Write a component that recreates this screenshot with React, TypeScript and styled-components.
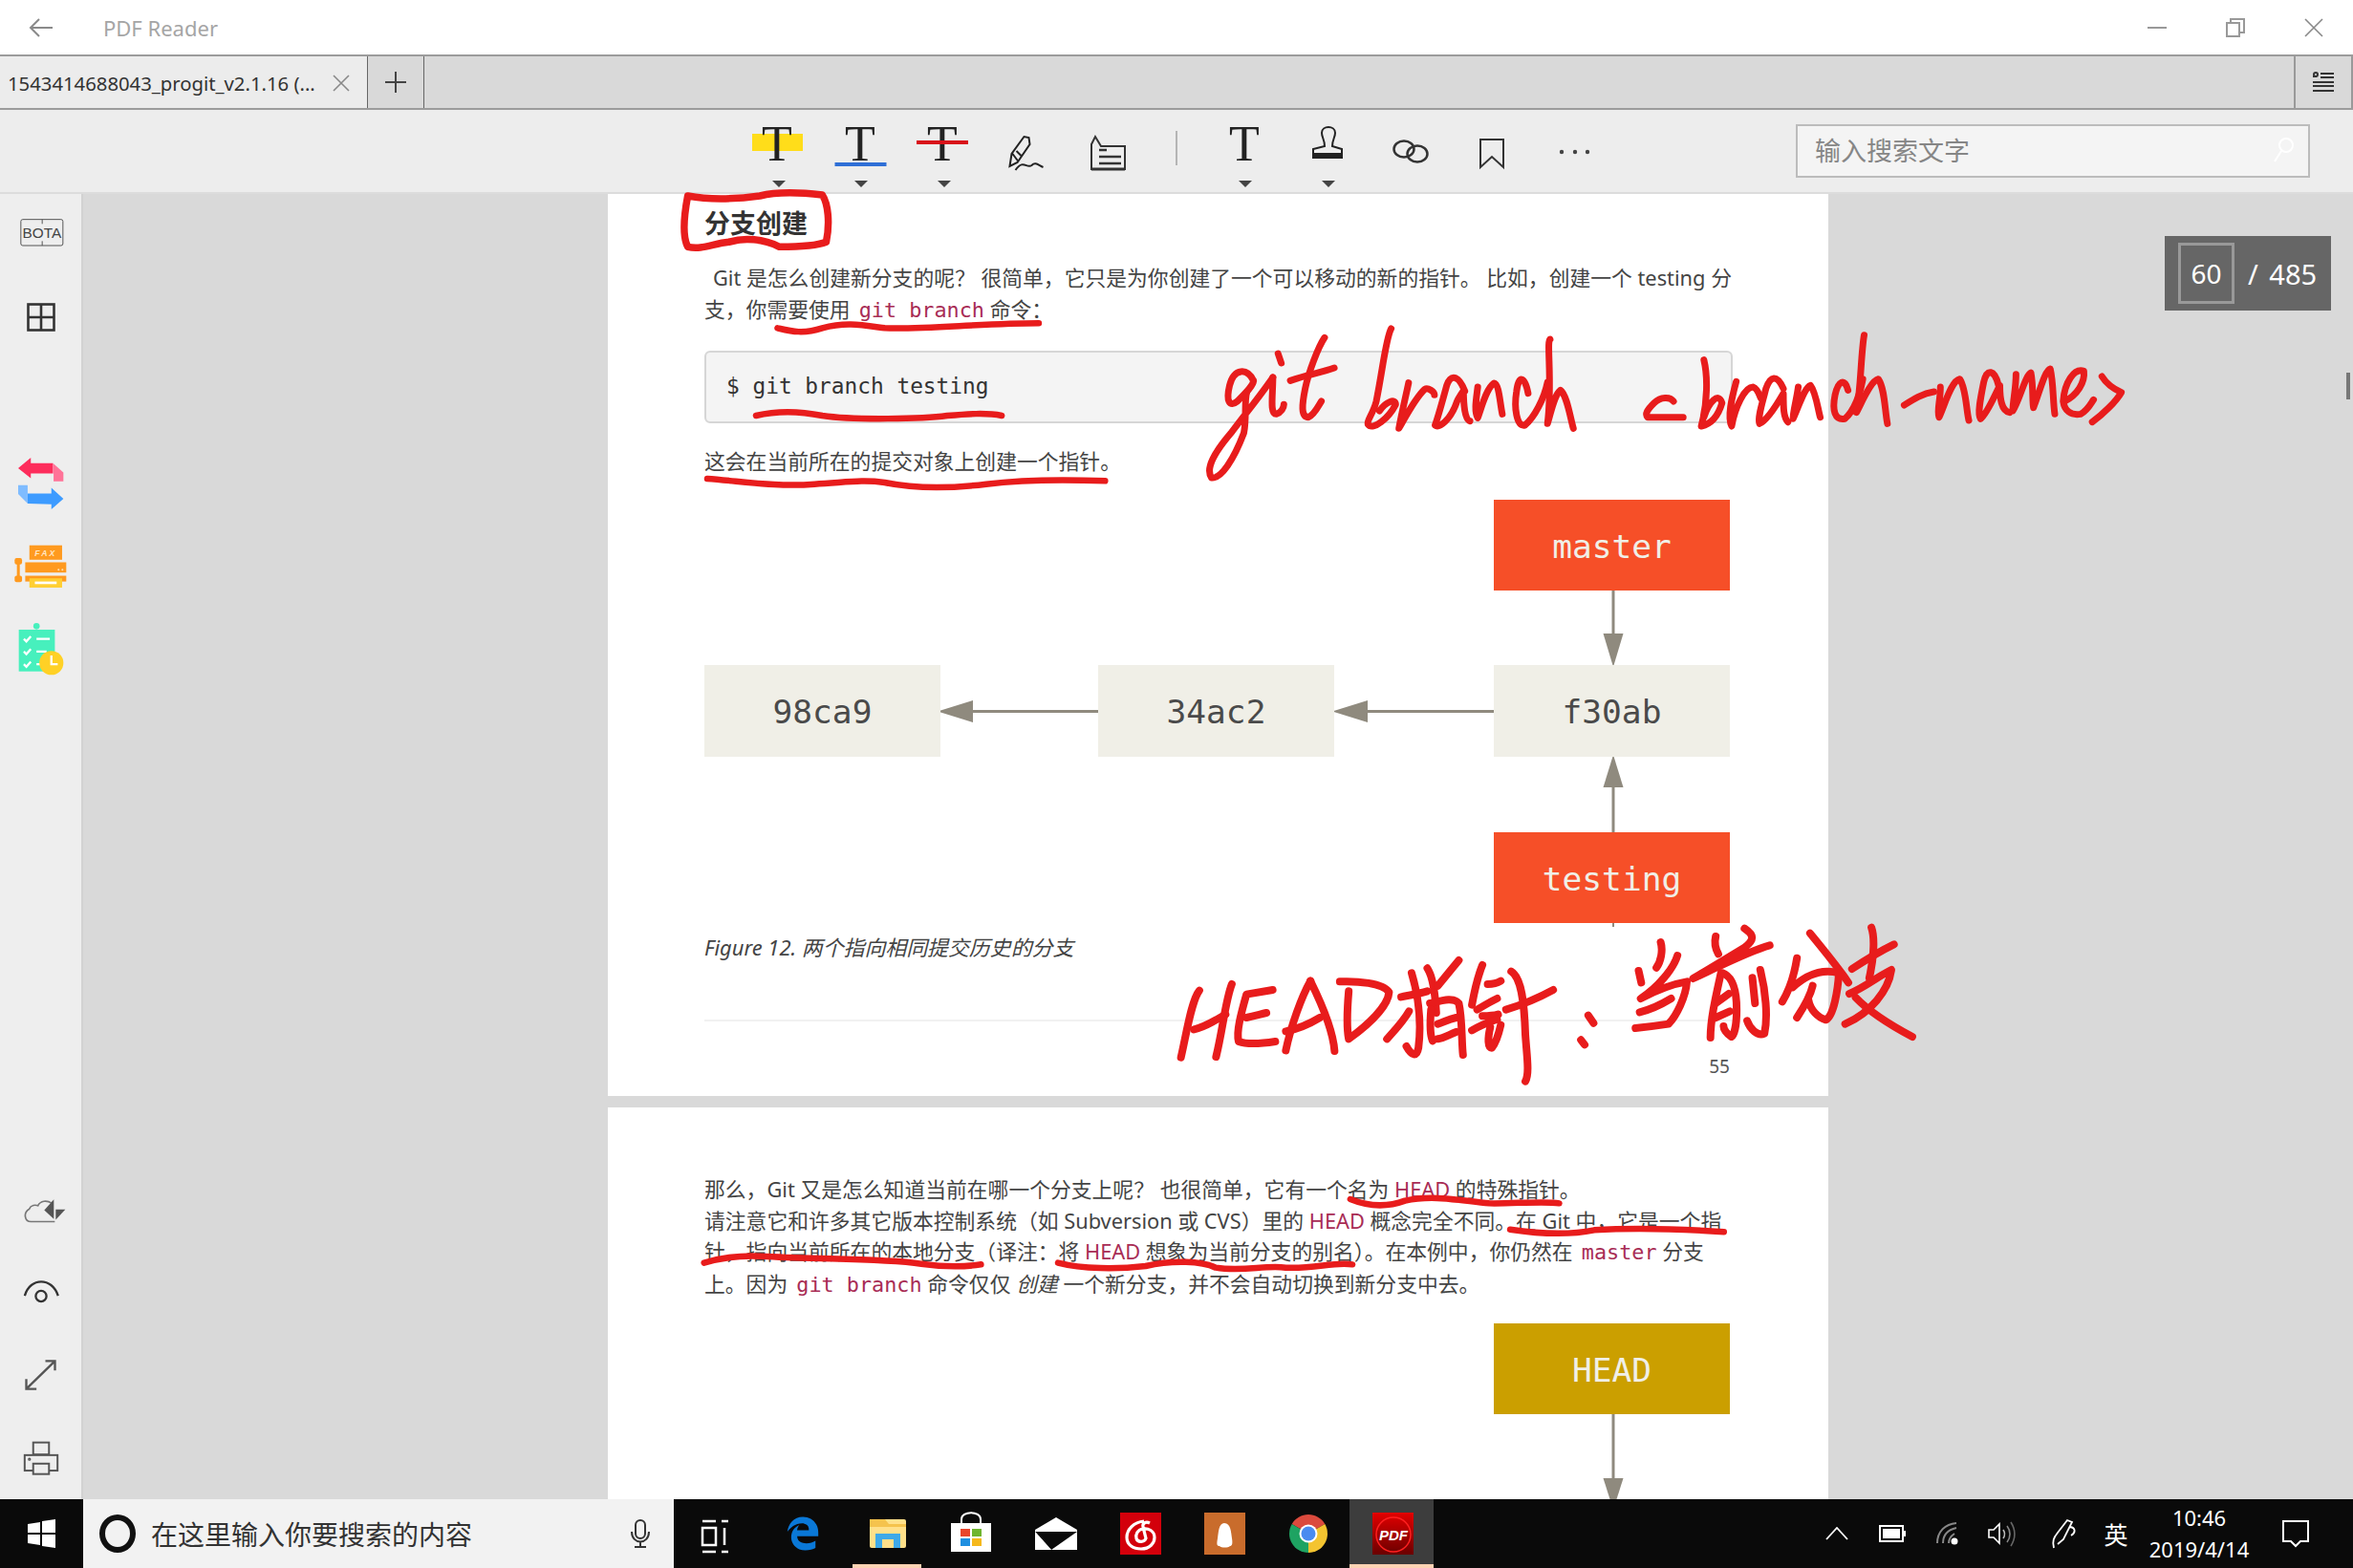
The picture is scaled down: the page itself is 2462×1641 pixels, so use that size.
import React from "react";
import styled, { createGlobalStyle } from "styled-components";
import { FaEdgeLegacy } from "react-icons/fa6";

const SANS = `"Noto Sans", "Noto Sans CJK SC", sans-serif`;
const CJK = `"Noto Sans CJK SC", "Noto Sans", sans-serif`;
const MONO = `"DejaVu Sans Mono", "Liberation Mono", "Noto Sans CJK SC", monospace`;

const Global = createGlobalStyle`
  html, body { margin: 0; padding: 0; overflow: hidden; background: #fff; }
  * { box-sizing: border-box; }
`;

const Shell = styled.div`
  position: relative;
  width: 2462px;
  height: 1641px;
  display: flex;
  flex-direction: column;
  overflow: hidden;
  font-family: ${SANS};
`;

/* title bar */
const TitleBar = styled.header`
  height: 57px;
  flex: none;
  display: flex;
  align-items: center;
  background: #fff;
  padding-left: 30px;
`;
const TitleText = styled.span`
  margin-left: 52px;
  font-size: 22px;
  color: #a5a5a5;
`;
const WindowControls = styled.div`
  margin-left: auto;
  display: flex;
`;
const WinButton = styled.button`
  width: 82px;
  height: 57px;
  padding: 0;
  border: 0;
  background: none;
  display: flex;
  align-items: center;
  justify-content: center;
`;

/* tabs */
const TabBar = styled.nav`
  height: 58px;
  flex: none;
  display: flex;
  background: #d9d9d9;
  border-top: 2px solid #9c9c9c;
  border-bottom: 2px solid #9c9c9c;
`;
const Tab = styled.div`
  width: 385px;
  display: flex;
  align-items: center;
  justify-content: space-between;
  padding: 2px 18px 0 8px;
  background: #ececec;
  border-right: 1px solid #666;
  font-size: 20.3px;
  color: #333;
  white-space: nowrap;
`;
const NewTab = styled.div`
  width: 59px;
  display: flex;
  align-items: center;
  justify-content: center;
  border-right: 1px solid #666;
`;
const TabMenu = styled.div`
  margin-left: auto;
  width: 62px;
  display: flex;
  align-items: center;
  justify-content: center;
  border-left: 2px solid #999;
  border-right: 2px solid #999;
`;

/* toolbar */
const Toolbar = styled.div`
  height: 88px;
  flex: none;
  display: flex;
  align-items: flex-start;
  padding-left: 770px;
  background: #ededed;
  border-bottom: 2px solid #dcdcdc;
`;
const Tool = styled.div`
  width: 86.5px;
  height: 86px;
  padding-top: 10px;
  display: flex;
  flex-direction: column;
  align-items: center;
  flex: none;
`;
const ToolIcon = styled.svg`
  display: block;
  width: 56px;
  height: 56px;
  overflow: visible;
`;
const Caret = styled.i`
  display: block;
  margin: 8px 0 0 3px;
  width: 0;
  height: 0;
  border-left: 7px solid transparent;
  border-right: 7px solid transparent;
  border-top: 7px solid #444;
`;
const ToolDivider = styled.div`
  width: 56px;
  flex: none;
  height: 85px;
  display: flex;
  justify-content: center;
  padding-top: 22px;
  &::before {
    content: "";
    display: block;
    width: 2px;
    height: 36px;
    background: #b5b5b5;
  }
`;
const SearchBox = styled.div`
  position: absolute;
  left: 1879px;
  top: 130px;
  width: 538px;
  height: 56px;
  display: flex;
  align-items: center;
  justify-content: space-between;
  padding: 0 14px 4px 18px;
  background: #f4f4f4;
  border: 2px solid #bcbcbc;
  font-family: ${CJK};
  font-size: 27px;
  color: #868686;
`;

/* body */
const Body = styled.div`
  flex: 1;
  min-height: 0;
  display: flex;
  overflow: hidden;
`;
const Sidebar = styled.aside`
  width: 87px;
  flex: none;
  display: flex;
  flex-direction: column;
  justify-content: space-between;
  background: #eeeeee;
  border-right: 2px solid #d2d2d2;
`;
const SideGroup = styled.div<{ $offset?: number }>`
  display: flex;
  flex-direction: column;
  margin-top: ${(p) => p.$offset ?? 0}px;
`;
const SideSlot = styled.div<{ $left?: number; $top?: number; $bottom?: number }>`
  height: 87px;
  display: flex;
  align-items: center;
  justify-content: center;
  padding-left: ${(p) => p.$left ?? 0}px;
  padding-top: ${(p) => p.$top ?? 0}px;
  padding-bottom: ${(p) => p.$bottom ?? 0}px;
`;
const Canvas = styled.main`
  position: relative;
  flex: 1;
  min-width: 0;
  display: flex;
  flex-direction: column;
  align-items: center;
  gap: 12px;
  background: #d9d9d9;
  overflow: hidden;
`;
const Page = styled.section<{ $top: number; $height?: number }>`
  width: 1277px;
  flex: none;
  height: ${(p) => (p.$height ? `${p.$height}px` : "auto")};
  padding: ${(p) => p.$top}px 100px 0 101px;
  background: #fff;
  color: #444;
  font-size: 21.8px;
`;
const Heading = styled.h3`
  margin: 0;
  font-family: ${CJK};
  font-size: 27px;
  line-height: 33px;
  font-weight: 700;
  color: #333;
`;
const Lines = styled.div<{ $mt?: number; $lh?: number }>`
  margin-top: ${(p) => p.$mt ?? 0}px;
  line-height: ${(p) => p.$lh ?? 33}px;
`;
const Line = styled.div<{ $indent?: number }>`
  white-space: nowrap;
  padding-left: ${(p) => p.$indent ?? 0}px;
`;
const Code = styled.span`
  margin-left: 3.5px;
  font-family: ${MONO};
  font-size: 21.8px;
  color: #a82c55;
`;
const Red = styled.span`
  color: #a82c55;
`;
const Em = styled.em`
  font-style: italic;
`;
const CodeBox = styled.pre`
  margin: 26px 0 0;
  height: 76px;
  padding: 0 21px 3px;
  display: flex;
  align-items: center;
  background: #f4f4f4;
  border: 2px solid #d6d6d6;
  border-radius: 6px;
  font-family: ${MONO};
  font-size: 22.8px;
  color: #333;
`;
const DiagramGrid = styled.div`
  margin-top: 23.5px;
  display: grid;
  grid-template-columns: 246px 166px 247px 167px 250px;
  grid-template-rows: 95px 78px 96px 79px 95px;
  grid-template-areas:
    ". . . . master"
    ". . . . down"
    "a left1 b left2 c"
    ". . . . up"
    ". . . . testing";
`;
const Node = styled.div<{ $area?: string; $tone: "red" | "beige" | "gold"; $stub?: boolean }>`
  grid-area: ${(p) => p.$area ?? "auto"};
  position: relative;
  width: 247px;
  height: ${(p) => (p.$tone === "beige" ? 96 : 95)}px;
  padding-top: 3px;
  display: flex;
  align-items: center;
  justify-content: center;
  font-family: ${MONO};
  font-size: 34.5px;
  background: ${(p) => (p.$tone === "red" ? "#f64f28" : p.$tone === "gold" ? "#cb9f00" : "#f0efe7")};
  color: ${(p) => (p.$tone === "beige" ? "#4a4a4a" : "#f0efe7")};
  &::after {
    content: "";
    display: ${(p) => (p.$stub ? "block" : "none")};
    position: absolute;
    left: 124px;
    top: 100%;
    width: 2px;
    height: 4px;
    background: #8f8a7e;
  }
`;
const ArrowCell = styled.svg<{ $area: string }>`
  grid-area: ${(p) => p.$area};
  display: block;
  width: 100%;
  height: 100%;
  overflow: visible;
`;
const Caption = styled.div`
  margin-top: 9px;
  line-height: 33px;
  font-style: italic;
  font-size: 21.9px;
  color: #444;
`;
const FootRule = styled.hr`
  margin: 59px 0 0;
  border: 0;
  height: 2px;
  background: #f1f1f1;
`;
const PageNumber = styled.div`
  margin-top: 35px;
  padding-right: 3px;
  text-align: right;
  font-size: 19px;
  line-height: 24px;
  color: #555;
`;
const HeadBlock = styled.div`
  margin: 23.5px 0 0 826px;
  width: 247px;
`;
const HeadStem = styled.svg`
  display: block;
  width: 247px;
  height: 100px;
`;
const PageCounter = styled.div`
  position: absolute;
  left: 2178px;
  top: 44px;
  width: 174px;
  height: 78px;
  display: flex;
  align-items: center;
  padding-left: 14px;
  background: #666;
  color: #fff;
  font-size: 28px;
`;
const PageInput = styled.div`
  width: 59px;
  height: 64px;
  display: flex;
  align-items: center;
  justify-content: center;
  border: 3px solid #999;
  margin-right: 14px;
`;
const PageTotal = styled.span`
  font-size: 29px;
  word-spacing: 4px;
`;
const ScrollThumb = styled.div`
  position: absolute;
  right: 3px;
  top: 187px;
  width: 4px;
  height: 28px;
  background: #777;
`;

/* taskbar */
const Taskbar = styled.footer`
  height: 72px;
  flex: none;
  display: flex;
  background: #0a0a0a;
  color: #fff;
`;
const StartButton = styled.div`
  width: 87px;
  flex: none;
  display: flex;
  align-items: center;
  justify-content: center;
`;
const TaskSearch = styled.div`
  width: 618px;
  flex: none;
  display: flex;
  align-items: center;
  background: #f2f2f2;
  padding-left: 17px;
  font-family: ${CJK};
  font-size: 28px;
  color: #333;
`;
const Cortana = styled.i`
  display: block;
  width: 38px;
  height: 40px;
  border: 6px solid #111;
  border-radius: 50%;
  margin-right: 16px;
`;
const MicWrap = styled.span`
  margin-left: auto;
  margin-right: 25px;
  display: flex;
`;
const TaskSlot = styled.div<{ $w: number; $active?: boolean; $open?: boolean }>`
  position: relative;
  width: ${(p) => p.$w}px;
  flex: none;
  background: ${(p) => (p.$active ? "#3d3d3d" : "transparent")};
  &::after {
    content: "";
    display: ${(p) => (p.$active || p.$open ? "block" : "none")};
    position: absolute;
    bottom: 0;
    left: ${(p) => (p.$active ? 0 : 8)}px;
    right: ${(p) => (p.$active ? 0 : 8)}px;
    height: 4px;
    background: #fdd2b3;
  }
`;
const TaskIcon = styled.svg`
  display: block;
  width: 100%;
  height: 72px;
`;
const EdgeLogo = styled(FaEdgeLegacy)`
  position: absolute;
  left: 26px;
  top: 17px;
  width: 36px;
  height: 38px;
  color: #0a78d7;
`;
const Tray = styled.div`
  margin-left: auto;
  display: flex;
  padding-right: 30px;
`;
const TrayItem = styled.div<{ $w: number }>`
  width: ${(p) => p.$w}px;
  flex: none;
  display: flex;
  flex-direction: column;
  align-items: center;
  justify-content: center;
`;
const ImeLabel = styled.span`
  font-family: ${CJK};
  font-size: 25px;
`;
const ClockLine = styled.span`
  font-size: 22px;
  line-height: 33px;
  white-space: nowrap;
`;

/* ink overlay */
const InkLayer = styled.svg`
  position: absolute;
  left: 0;
  top: 0;
  width: 2462px;
  height: 1641px;
  pointer-events: none;
  fill: none;
  stroke: #e81c1c;
  stroke-linecap: round;
  stroke-linejoin: round;
`;

const Ink: React.FC<{ x: number; y: number; sx: number; sy?: number; w: number; d: string[] }> = ({ x, y, sx, sy = 3, w, d }) => (
  <g transform={`translate(${x} ${y}) scale(${1 / sx} ${1 / sy})`}>
    {d.map((p, i) => (
      <path key={i} d={p} strokeWidth={w} vectorEffect="non-scaling-stroke" />
    ))}
  </g>
);

const scribble = [
  "M165 235 C155 195 135 195 128 250 C122 300 128 320 140 300 C155 270 165 250 165 235",
  "M195 225 C180 270 160 320 130 400 C105 460 90 510 100 540 C115 545 135 480 150 400 C155 350 150 300 155 270",
  "M195 225 C195 280 190 340 200 340 C208 335 212 320 212 310",
  "M203 150 L208 180",
  "M275 100 C265 130 250 210 245 260 C240 310 238 350 250 350 C260 340 265 315 270 300",
  "M222 235 C250 215 270 210 290 195",
  "M378 72 C370 100 365 200 355 300 C350 340 340 360 342 372 C350 395 375 350 385 310 C385 290 370 300 360 330",
  "M405 242 C400 290 395 330 390 385 C400 350 415 290 430 262 C435 255 445 270 445 280",
  "M492 268 C482 215 470 215 464 250 C458 295 452 340 446 375 C452 385 470 360 480 300 C482 290 490 265 490 268 C490 310 492 360 500 362",
  "M512 255 C510 290 506 330 512 352 C518 320 525 260 537 243 C545 245 546 300 550 340",
  "M590 275 C585 220 575 215 572 270 C568 320 572 380 585 375 C600 350 615 290 620 240",
  "M624 105 C618 110 628 240 620 370 C625 340 630 280 640 265 C650 280 655 350 660 385",
  "M815 300 C810 285 795 285 785 305 C775 325 770 340 775 350 C790 350 815 350 830 350",
  "M862 170 C868 220 868 300 858 378 C875 370 885 340 890 305 C885 270 870 300 862 350",
  "M912 238 C905 290 898 350 905 378 C910 320 925 255 938 255 C945 260 948 280 950 290",
  "M985 260 C975 215 965 220 958 260 C952 310 945 350 948 370 C960 360 975 310 985 275 C985 320 985 350 992 365",
  "M1008 255 C1005 300 1000 330 1000 355 C1008 320 1018 255 1027 250 C1035 270 1038 320 1042 350",
  "M1085 265 C1080 225 1070 235 1065 280 C1060 330 1065 360 1080 355 C1095 330 1105 270 1108 230",
  "M1110 92 C1105 150 1105 260 1098 335 C1105 310 1120 235 1132 230 C1142 260 1142 330 1146 370",
  "M1172 312 C1185 295 1200 275 1218 270",
  "M1228 255 C1228 300 1222 330 1226 350 C1235 310 1245 235 1258 230 C1268 260 1268 330 1272 360",
  "M1318 250 C1312 200 1300 195 1295 240 C1290 290 1285 340 1290 355 C1300 340 1310 290 1320 250 C1320 290 1322 330 1335 335",
  "M1345 215 C1345 260 1340 300 1340 330 C1350 300 1360 215 1368 210 C1372 250 1370 300 1372 320 C1380 280 1390 200 1398 198 C1403 240 1402 300 1405 340",
  "M1420 300 C1440 280 1452 240 1450 205 C1435 195 1420 240 1418 300 C1420 330 1430 345 1445 340 C1455 330 1460 310 1465 295",
  "M1478 222 C1485 245 1495 260 1508 272 C1500 300 1480 340 1463 365",
];

const headNote = [
  "M100 260 C85 290 75 400 65 470",
  "M162 240 C150 290 145 380 132 468",
  "M90 382 C110 375 130 355 150 335",
  "M240 258 L190 272 C180 330 170 390 175 420 C195 432 225 425 245 420",
  "M190 345 C205 340 215 335 228 330",
  "M312 230 C295 280 275 370 265 448",
  "M312 230 C330 290 355 380 358 450",
  "M265 388 C290 380 310 365 330 345",
  "M385 262 C382 320 380 370 385 412 C420 370 460 310 462 265 C450 235 400 230 368 232",
  "M505 205 C515 260 525 350 518 440 C515 470 505 465 495 435",
  "M485 280 C500 275 520 270 535 262",
  "M500 325 C490 355 470 390 458 412",
  "M535 190 C545 215 550 270 552 330",
  "M595 165 C580 195 565 225 555 245",
  "M540 300 C565 290 585 280 595 300 C602 350 600 420 603 462",
  "M542 320 C540 360 540 400 545 418",
  "M555 365 C565 360 575 350 590 345",
  "M555 412 C565 410 575 400 590 390",
  "M640 180 C630 220 625 260 620 305",
  "M650 240 C660 240 670 235 675 230",
  "M630 320 C645 305 655 295 668 285",
  "M640 340 C650 340 660 340 670 335",
  "M620 385 C635 370 650 360 668 350",
  "M655 375 C650 410 650 440 658 440 C668 420 672 390 675 368",
  "M695 200 C715 220 720 300 722 400 C725 470 730 520 722 545",
  "M685 320 C715 305 745 285 775 258",
  "M842 338 L852 362",
  "M828 415 L835 430",
  "M980 108 C985 135 980 170 972 188",
  "M938 198 L943 235",
  "M1012 150 C1005 190 975 250 942 285 C965 265 1000 240 1030 232 C1028 280 1010 340 995 365 C975 370 950 375 932 378",
  "M940 328 C960 320 980 305 1000 285",
  "M1085 90 C1082 110 1085 130 1090 145",
  "M1140 65 C1158 85 1160 100 1140 125 C1110 155 1070 195 1042 222 C1090 185 1150 135 1188 118",
  "M1095 205 C1085 280 1075 350 1075 408",
  "M1098 205 C1115 215 1125 250 1125 320 C1125 370 1120 400 1115 405 C1105 395 1100 380 1100 372",
  "M1085 300 L1110 270",
  "M1085 345 L1112 325",
  "M1155 220 L1160 300",
  "M1170 195 C1180 260 1185 340 1178 395 C1165 405 1150 380 1145 355",
  "M1240 158 C1235 210 1225 260 1212 295",
  "M1265 80 C1290 130 1320 190 1338 235",
  "M1232 250 C1255 215 1285 190 1320 205 C1318 260 1310 340 1295 352 C1280 345 1265 320 1262 290",
  "M1270 245 C1265 280 1250 320 1240 345",
  "M1382 62 C1390 100 1385 170 1378 220",
  "M1345 192 C1370 165 1400 135 1425 115",
  "M1340 270 C1370 250 1395 215 1420 195 C1415 260 1380 330 1332 365",
  "M1352 282 C1380 330 1420 370 1460 405",
];

const ToolT: React.FC<{ cx: number; children?: React.ReactNode }> = ({ cx, children }) => (
  <ToolIcon viewBox={`${cx - 28} 124 56 56`}>
    {children}
    <text x={cx} y={167} textAnchor="middle" fontFamily='"Liberation Serif", serif' fontSize="52" fill="#222">T</text>
  </ToolIcon>
);

const ARROW = "#8f8a7e";

const App: React.FC = () => (
  <Shell>
    <Global />
    <TitleBar>
      <svg width="26" height="22" viewBox="0 0 26 22" fill="none" stroke="#8a8a8a" strokeWidth="2">
        <path d="M25 11H3M11 2L2 11L11 20" />
      </svg>
      <TitleText>PDF Reader</TitleText>
      <WindowControls>
        <WinButton><svg width="20" height="4"><rect width="20" height="2" y="1" fill="#999" /></svg></WinButton>
        <WinButton>
          <svg width="20" height="20" fill="none" stroke="#999" strokeWidth="2"><rect x="1" y="5" width="13" height="14" /><path d="M5 5V1H19V15H14" /></svg>
        </WinButton>
        <WinButton>
          <svg width="20" height="20" fill="none" stroke="#888" strokeWidth="1.6"><path d="M1 1L19 19M19 1L1 19" /></svg>
        </WinButton>
      </WindowControls>
    </TitleBar>

    <TabBar>
      <Tab>
        <span>1543414688043_progit_v2.1.16 (...</span>
        <svg width="18" height="18" fill="none" stroke="#888" strokeWidth="1.6"><path d="M1 1L17 17M17 1L1 17" /></svg>
      </Tab>
      <NewTab>
        <svg width="22" height="22" stroke="#444" strokeWidth="2"><path d="M11 0V22M0 11H22" /></svg>
      </NewTab>
      <TabMenu>
        <svg width="24" height="22" viewBox="0 0 24 22" fill="none" stroke="#333" strokeWidth="2"><path d="M1 5H5M9 2H23M9 6H23M1 11H23M1 15H23M1 20H23" /><circle cx="4" cy="3" r="2" /></svg>
      </TabMenu>
    </TabBar>

    <Toolbar>
      <Tool>
        <ToolT cx={813}><rect x="787" y="139" width="53" height="18" fill="#ffdd1a" /></ToolT>
        <Caret />
      </Tool>
      <Tool>
        <ToolT cx={899.5}><rect x="873" y="169" width="54" height="4" fill="#2f6fd6" /></ToolT>
        <Caret />
      </Tool>
      <Tool>
        <ToolIcon viewBox="958 124 56 56">
          <text x="986" y="167" textAnchor="middle" fontFamily='"Liberation Serif", serif' fontSize="52" fill="#222">T</text>
          <rect x="959" y="146" width="54" height="4" fill="#d8121a" />
        </ToolIcon>
        <Caret />
      </Tool>
      <Tool>
        <ToolIcon viewBox="1044.5 124 56 56" fill="none" stroke="#222" strokeWidth="2">
          <path d="M1056 173 L1058 160 L1071 142 L1076 143 L1077 150 L1064 169 Z M1059 160 L1065 168 M1063 157 L1068 162" />
          <path d="M1062 177 C1070 165 1074 176 1079 172 C1083 168 1086 172 1091 174" />
        </ToolIcon>
      </Tool>
      <Tool>
        <ToolIcon viewBox="1131 124 56 56" fill="none" stroke="#333" strokeWidth="2">
          <path d="M1142 176 V150 L1146 142 L1152 152 H1177 V176 Z" />
          <path d="M1150 156 H1158 M1150 163 H1173 M1150 170 H1173" strokeWidth="2.5" />
          <path d="M1142 176 H1177" strokeWidth="3" />
        </ToolIcon>
      </Tool>
      <ToolDivider />
      <Tool>
        <ToolT cx={1301} />
        <Caret />
      </Tool>
      <Tool>
        <ToolIcon viewBox="1361 124 56 56" fill="none" stroke="#222" strokeWidth="2">
          <path d="M1387 152 C1387 145 1384 143 1384 138 C1384 130 1398 130 1398 138 C1398 143 1395 145 1395 152 L1405 155 V160 H1375 V155 Z" />
          <rect x="1375" y="160" width="30" height="4" fill="#222" />
        </ToolIcon>
        <Caret />
      </Tool>
      <Tool>
        <ToolIcon viewBox="1447 124 56 56" fill="none" stroke="#333" strokeWidth="2.5">
          <ellipse cx="1469" cy="155" rx="10.5" ry="8.5" />
          <ellipse cx="1483" cy="160" rx="10.5" ry="8.5" />
        </ToolIcon>
      </Tool>
      <Tool>
        <ToolIcon viewBox="1533 124 56 56" fill="none" stroke="#333" strokeWidth="2">
          <path d="M1549 145 H1573 V174 L1561 163 L1549 174 Z" />
        </ToolIcon>
      </Tool>
      <Tool>
        <ToolIcon viewBox="1620 124 56 56" fill="#444">
          <circle cx="1634" cy="158" r="2.2" /><circle cx="1648" cy="158" r="2.2" /><circle cx="1661" cy="158" r="2.2" />
        </ToolIcon>
      </Tool>
    </Toolbar>
    <SearchBox>
      <span>输入搜索文字</span>
      <svg width="24" height="28" fill="none" stroke="#fff" strokeWidth="2"><circle cx="15" cy="10" r="7" /><path d="M10 16L3 27" /></svg>
    </SearchBox>

    <Body>
      <Sidebar>
        <SideGroup $offset={-2}>
          <SideSlot $left={2} $bottom={4}>
            <svg width="47" height="30" viewBox="60 85 140 90" fill="none" stroke="#555" strokeWidth="3">
              <rect x="65" y="90" width="132" height="82" rx="6" />
              <path d="M132 90V104M132 158V172" />
              <text x="131" y="149" textAnchor="middle" fontFamily='"Liberation Sans", sans-serif' fontSize="46" fill="#444" stroke="none">BOTA</text>
            </svg>
          </SideSlot>
          <SideSlot>
            <svg width="30" height="30" viewBox="0 0 30 30" fill="none" stroke="#333" strokeWidth="2.6"><rect x="1.5" y="1.5" width="27" height="27" /><path d="M15 1V29M1 15H29" /></svg>
          </SideSlot>
          <SideSlot />
          <SideSlot>
            <svg width="48" height="57" viewBox="60 830 145 170">
              <polygon fill="#fd2d5c" points="60,868 100,835 100,852 170,852 170,885 100,885 100,900" />
              <polygon fill="#ff7398" points="170,852 203,882 203,910 172,910 172,885 170,885" />
              <polygon fill="#3d9bff" points="203,965 165,930 165,948 90,948 90,980 165,982 165,998" />
              <polygon fill="#7fbcff" points="60,922 90,922 90,980 60,950" />
            </svg>
          </SideSlot>
          <SideSlot>
            <svg width="57" height="47" viewBox="45 1110 170 140">
              <rect x="95" y="1115" width="102" height="45" fill="#ff9a1f" />
              <text x="146" y="1149" textAnchor="middle" fontFamily='"Liberation Sans", sans-serif' fontStyle="italic" fontWeight="700" fontSize="26" letterSpacing="6" fill="#ffe6c2">FAX</text>
              <rect x="82" y="1168" width="128" height="32" fill="#ff9a1f" />
              <rect x="82" y="1210" width="128" height="18" fill="#ff9a1f" />
              <rect x="95" y="1218" width="102" height="29" fill="#ffcf33" />
              <rect x="112" y="1228" width="68" height="8" fill="#fff" />
              <rect x="49" y="1155" width="23" height="20" rx="6" fill="#ff9a1f" />
              <rect x="56" y="1170" width="9" height="45" fill="#ff9a1f" />
              <rect x="49" y="1210" width="23" height="20" rx="6" fill="#ff9a1f" />
              <circle cx="186" cy="1191" r="3" fill="#ffe0b0" /><circle cx="198" cy="1191" r="3" fill="#ffe0b0" />
            </svg>
          </SideSlot>
          <SideSlot>
            <svg width="48" height="57" viewBox="60 1350 145 170">
              <rect x="62" y="1373" width="114" height="132" fill="#47f0bd" />
              <circle cx="118" cy="1362" r="10" fill="#47f0bd" />
              <path d="M78 1402L86 1410L100 1394M78 1442L86 1450L100 1434M78 1482L86 1490L100 1474M118 1402H160M118 1442H150M118 1482H130" fill="none" stroke="#fff" strokeWidth="7" />
              <circle cx="165" cy="1478" r="38" fill="#ffd126" />
              <path d="M165 1455V1482H185" fill="none" stroke="#fff" strokeWidth="7" />
            </svg>
          </SideSlot>
        </SideGroup>
        <SideGroup>
          <SideSlot $left={7} $top={6}>
            <svg width="45" height="27" viewBox="75 105 135 80">
              <path d="M175 178H100C80 178 75 150 95 138C100 125 115 125 122 128C130 112 150 110 165 120" fill="none" stroke="#777" strokeWidth="5" />
              <polygon fill="#555" points="172,108 142,142 172,170" />
              <polygon fill="#555" points="178,140 208,140 178,172" />
            </svg>
          </SideSlot>
          <SideSlot>
            <svg width="40" height="28" viewBox="70 350 120 85" fill="none" stroke="#333" strokeWidth="7">
              <path d="M78 405C95 345 165 345 184 405" /><circle cx="130" cy="406" r="17" />
            </svg>
          </SideSlot>
          <SideSlot>
            <svg width="37" height="35" viewBox="75 605 110 105" fill="none" stroke="#555" strokeWidth="7">
              <path d="M88 700L175 615M145 615H175V645M85 672V703H117" />
            </svg>
          </SideSlot>
          <SideSlot>
            <svg width="40" height="38" viewBox="70 860 120 115" fill="none" stroke="#555" strokeWidth="6">
              <rect x="105" y="868" width="50" height="38" />
              <rect x="78" y="908" width="104" height="49" fill="#eee" />
              <rect x="105" y="935" width="50" height="33" fill="#eee" />
              <circle cx="93" cy="921" r="2" />
            </svg>
          </SideSlot>
        </SideGroup>
      </Sidebar>

      <Canvas>
        <Page $top={13} $height={944}>
          <Heading>分支创建</Heading>
          <Lines $mt={25}>
            <Line $indent={9}>Git 是怎么创建新分支的呢？ 很简单，它只是为你创建了一个可以移动的新的指针。 比如，创建一个 testing 分</Line>
            <Line>支，你需要使用 <Code>git branch</Code> 命令：</Line>
          </Lines>
          <CodeBox>$ git branch testing</CodeBox>
          <Lines $mt={23}>
            <Line>这会在当前所在的提交对象上创建一个指针。</Line>
          </Lines>
          <DiagramGrid>
            <Node $area="master" $tone="red">master</Node>
            <ArrowCell $area="down" viewBox="0 0 250 78">
              <path d="M125 0V50" stroke={ARROW} strokeWidth="3" />
              <polygon points="125,80 114.5,45 135.5,45" fill={ARROW} />
            </ArrowCell>
            <Node $area="a" $tone="beige">98ca9</Node>
            <ArrowCell $area="left1" viewBox="0 0 166 96">
              <path d="M30 48.5H166" stroke={ARROW} strokeWidth="3" />
              <polygon points="-2,48.5 35,37 35,60" fill={ARROW} />
            </ArrowCell>
            <Node $area="b" $tone="beige">34ac2</Node>
            <ArrowCell $area="left2" viewBox="0 0 167 96">
              <path d="M30 48.5H167" stroke={ARROW} strokeWidth="3" />
              <polygon points="-2,48.5 35,37 35,60" fill={ARROW} />
            </ArrowCell>
            <Node $area="c" $tone="beige">f30ab</Node>
            <ArrowCell $area="up" viewBox="0 0 250 79">
              <path d="M125 28V79" stroke={ARROW} strokeWidth="3" />
              <polygon points="125,-2 114.5,32 135.5,32" fill={ARROW} />
            </ArrowCell>
            <Node $area="testing" $tone="red" $stub>testing</Node>
          </DiagramGrid>
          <Caption>Figure 12. 两个指向相同提交历史的分支</Caption>
          <FootRule />
          <PageNumber>55</PageNumber>
        </Page>

        <Page $top={70}>
          <Lines $lh={32.7}>
            <Line>那么，Git 又是怎么知道当前在哪一个分支上呢？ 也很简单，它有一个名为 <Red>HEAD</Red> 的特殊指针。</Line>
            <Line>请注意它和许多其它版本控制系统（如 Subversion 或 CVS）里的 <Red>HEAD</Red> 概念完全不同。在 Git 中，它是一个指</Line>
            <Line>针，指向当前所在的本地分支（译注：将 <Red>HEAD</Red> 想象为当前分支的别名）。在本例中，你仍然在 <Code>master</Code> 分支</Line>
            <Line>上。因为 <Code>git branch</Code> 命令仅仅 <Em>创建</Em> 一个新分支，并不会自动切换到新分支中去。</Line>
          </Lines>
          <HeadBlock>
            <Node $tone="gold">HEAD</Node>
            <HeadStem viewBox="0 0 247 100">
              <path d="M125 0V72" stroke={ARROW} strokeWidth="3" />
              <polygon points="125,100 114.5,67 135.5,67" fill={ARROW} />
            </HeadStem>
          </HeadBlock>
        </Page>

        <PageCounter>
          <PageInput>60</PageInput>
          <PageTotal>/ 485</PageTotal>
        </PageCounter>
        <ScrollThumb />
      </Canvas>
    </Body>

    <Taskbar>
      <StartButton>
        <svg width="30" height="30" viewBox="29 1590 30 30" fill="#fff">
          <polygon points="29,1595 42,1593 42,1604 29,1604" />
          <polygon points="44,1592 58,1590 58,1604 44,1604" />
          <polygon points="29,1606 42,1606 42,1617 29,1615" />
          <polygon points="44,1606 58,1606 58,1620 44,1618" />
        </svg>
      </StartButton>
      <TaskSearch>
        <Cortana />
        <span>在这里输入你要搜索的内容</span>
        <MicWrap>
          <svg width="20" height="30" viewBox="0 0 20 30" fill="none" stroke="#333" strokeWidth="2">
            <rect x="5" y="1" width="10" height="19" rx="5" /><path d="M1 13C1 27 19 27 19 13M10 24V29M4 29H16" />
          </svg>
        </MicWrap>
      </TaskSearch>

      <TaskSlot $w={91}>
        <TaskIcon viewBox="705 1569 91 72" fill="none" stroke="#fff" strokeWidth="2.5">
          <path d="M735 1592H749M735 1624H749M735 1599H749V1617H735Z M755 1592H762M755 1624H762M758 1599V1617" />
        </TaskIcon>
      </TaskSlot>
      <TaskSlot $w={88}>
        <EdgeLogo />
      </TaskSlot>
      <TaskSlot $w={88} $open>
        <TaskIcon viewBox="884 1569 88 72">
          <rect x="910" y="1590" width="38" height="30" rx="2" fill="#ffe08a" />
          <path d="M910 1590H926L930 1595H948V1598H910Z" fill="#f5c34d" />
          <path d="M916 1620V1605H942V1620H935V1611H923V1620Z" fill="#3fa9e8" />
        </TaskIcon>
      </TaskSlot>
      <TaskSlot $w={88}>
        <TaskIcon viewBox="972 1569 88 72">
          <path d="M1006 1594V1590C1006 1581 1026 1581 1026 1590V1594" fill="none" stroke="#fff" strokeWidth="2" />
          <rect x="995" y="1594" width="42" height="30" fill="#fff" />
          <rect x="1005" y="1600" width="10" height="8" fill="#e8452c" />
          <rect x="1017" y="1600" width="10" height="8" fill="#6fb52f" />
          <rect x="1005" y="1610" width="10" height="8" fill="#1f8fe0" />
          <rect x="1017" y="1610" width="10" height="8" fill="#f5b81c" />
        </TaskIcon>
      </TaskSlot>
      <TaskSlot $w={88}>
        <TaskIcon viewBox="1060 1569 88 72">
          <polygon points="1083,1601 1105,1588 1127,1601 1127,1622 1083,1622" fill="#fff" />
          <polygon points="1083,1603 1127,1603 1100,1622" fill="#0a0a0a" />
          <polygon points="1083,1603 1100,1622 1083,1622" fill="#fff" />
        </TaskIcon>
      </TaskSlot>
      <TaskSlot $w={88}>
        <TaskIcon viewBox="1148 1569 88 72">
          <rect x="1172" y="1583" width="43" height="44" fill="#d3000b" />
          <path d="M1197 1592C1186 1593 1179 1601 1179 1609C1179 1617 1186 1621 1194 1621C1203 1621 1208 1615 1208 1609C1208 1602 1201 1599 1196 1600C1190 1601 1188 1606 1189 1610C1190 1614 1197 1615 1199 1610L1196 1598C1195 1594 1199 1592 1203 1594" fill="none" stroke="#fff" strokeWidth="3.2" />
        </TaskIcon>
      </TaskSlot>
      <TaskSlot $w={88}>
        <TaskIcon viewBox="1236 1569 88 72">
          <rect x="1260" y="1583" width="43" height="44" fill="#c96c2c" />
          <path d="M1281 1594C1288 1594 1288 1604 1289 1610C1290 1616 1289 1618 1287 1618C1285 1620 1278 1620 1276 1618C1273 1618 1273 1616 1274 1610C1275 1604 1275 1594 1281 1594Z" fill="#fff" />
        </TaskIcon>
      </TaskSlot>
      <TaskSlot $w={88}>
        <TaskIcon viewBox="1324 1569 88 72">
          <path d="M1369 1605L1351.7 1595A20 20 0 0 1 1386.3 1595Z" fill="#db4a3d" />
          <path d="M1369 1605L1386.3 1595A20 20 0 0 1 1369 1625Z" fill="#f4c430" />
          <path d="M1369 1605L1369 1625A20 20 0 0 1 1351.7 1595Z" fill="#1ea362" />
          <circle cx="1369" cy="1605" r="9.5" fill="#fff" />
          <circle cx="1369" cy="1605" r="7.5" fill="#4a8bf0" />
        </TaskIcon>
      </TaskSlot>
      <TaskSlot $w={88} $active>
        <TaskIcon viewBox="1412 1569 88 72">
          <defs>
            <linearGradient id="pdfGrad" x1="0" y1="0" x2="0" y2="1">
              <stop offset="0" stopColor="#e30000" />
              <stop offset="1" stopColor="#6a0000" />
            </linearGradient>
          </defs>
          <rect x="1436" y="1583" width="43" height="44" fill="url(#pdfGrad)" />
          <circle cx="1458" cy="1606" r="18" fill="none" stroke="#ff2020" strokeWidth="1.5" />
          <text x="1458" y="1612" textAnchor="middle" fontFamily='"Liberation Sans", sans-serif' fontStyle="italic" fontWeight="700" fontSize="15" fill="#fff">PDF</text>
        </TaskIcon>
      </TaskSlot>

      <Tray>
        <TrayItem $w={58}>
          <svg width="24" height="14" fill="none" stroke="#fff" strokeWidth="1.8"><path d="M1 13L12 1L23 13" /></svg>
        </TrayItem>
        <TrayItem $w={58}>
          <svg width="28" height="18" fill="none" stroke="#fff" strokeWidth="2"><rect x="1" y="1" width="24" height="16" /><rect x="4" y="4" width="18" height="10" fill="#fff" stroke="none" /><rect x="26" y="6" width="2" height="6" fill="#fff" stroke="none" /></svg>
        </TrayItem>
        <TrayItem $w={58}>
          <svg width="26" height="24" fill="none" stroke="#888" strokeWidth="2"><path d="M2 22C2 10 10 2 22 1M8 22C8 13 13 8 22 6M14 22C14 17 17 14 20 12" /><circle cx="20" cy="20" r="3.5" fill="#fff" stroke="none" /></svg>
        </TrayItem>
        <TrayItem $w={53}>
          <svg width="30" height="28" fill="none" stroke="#fff" strokeWidth="1.6"><path d="M2 10H7L13 4V24L7 18H2Z" /><path d="M17 10C19 13 19 16 17 19" stroke="#bbb" /><path d="M21 6C25 11 25 18 21 23" stroke="#888" /><path d="M25 2C30 10 30 19 25 27" stroke="#666" /></svg>
        </TrayItem>
        <TrayItem $w={78}>
          <svg width="28" height="32" viewBox="0 0 28 32" fill="none" stroke="#fff" strokeWidth="1.8"><path d="M4 31C2 24 4 20 8 15L18 2L23 4L14 22L8 27M21 9C27 10 27 15 22 18" /></svg>
        </TrayItem>
        <TrayItem $w={32}><ImeLabel>英</ImeLabel></TrayItem>
        <TrayItem $w={142}>
          <ClockLine>10:46</ClockLine>
          <ClockLine>2019/4/14</ClockLine>
        </TrayItem>
        <TrayItem $w={60}>
          <svg width="30" height="30" fill="none" stroke="#fff" strokeWidth="2"><path d="M2 2H28V23H20L15 28L10 23H2Z" /></svg>
        </TrayItem>
      </Tray>
    </Taskbar>

    <InkLayer viewBox="0 0 2462 1641">
      <Ink x={640} y={190} sx={2.45} w={7.5} d={[
        "M195 45 C185 110 180 170 195 205 C230 215 260 195 300 190 C340 175 390 180 430 205 C480 205 530 200 550 190 C560 130 555 70 540 42 C490 35 430 30 380 45 C320 55 260 60 195 45",
      ]} />
      <Ink x={640} y={190} sx={2.45} w={6.5} d={[
        "M425 460 C460 470 490 480 540 460 C600 440 640 450 700 460 C800 465 950 445 1095 445",
        "M370 735 C420 720 480 720 540 735 C620 750 800 745 860 735 C910 730 960 725 1000 735",
        "M245 933 C330 940 420 960 520 950 C600 945 640 935 700 945 C780 965 860 965 960 950 C1060 935 1160 935 1265 940",
      ]} />
      <Ink x={1200} y={320} sx={1.479} w={7} d={scribble} />
      <Ink x={1200} y={950} sx={1.823} w={8} d={headNote} />
      <Ink x={700} y={1200} sx={1.3635} w={6.5} d={[
        "M972 165 C1000 190 1025 190 1050 170 C1090 150 1130 170 1170 178 C1200 180 1250 170 1270 178",
        "M1200 260 C1230 270 1280 280 1320 262 C1370 255 1440 258 1505 268",
        "M50 365 C80 345 110 340 140 345 C220 355 300 350 360 368 C400 380 430 375 445 370",
        "M555 365 C590 385 640 385 680 375 C720 355 760 360 780 380 C820 395 850 370 880 380 C920 385 950 360 975 370",
      ]} />
    </InkLayer>
  </Shell>
);

export default App;
